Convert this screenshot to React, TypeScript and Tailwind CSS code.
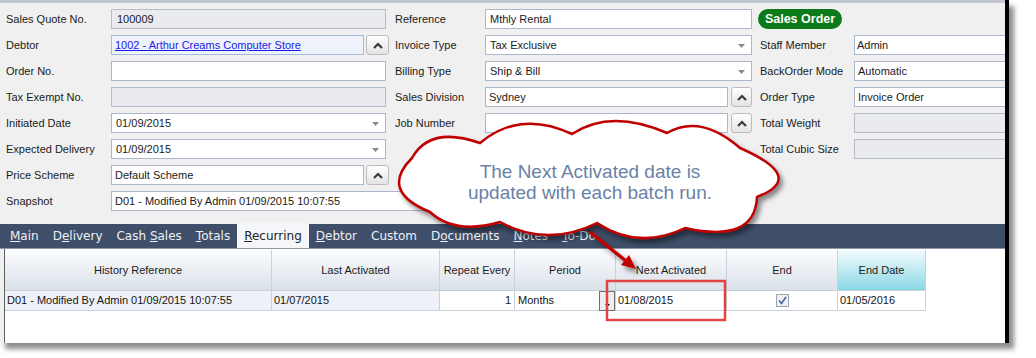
import React from "react";

const LBL = "h-[20px] shrink-0 flex items-center text-[11px] text-[#1b1b1b] whitespace-nowrap";

function DropArrow() {
  return (
    <svg width="7" height="4" viewBox="0 0 7 4" className="absolute right-[6px] top-[8px]">
      <polygon points="0,0 7,0 3.5,4" fill="#8a8a8a" />
    </svg>
  );
}

function UpBtn({ className }: { className: string }) {
  return (
    <div className={className}>
      <svg width="10" height="7" viewBox="0 0 10 7">
        <polyline points="1,6 5,2 9,6" fill="none" stroke="#3a3a3a" strokeWidth="2.2" />
      </svg>
    </div>
  );
}

const btnCls =
  "h-[20px] shrink-0 flex items-center justify-center rounded-[3px] border border-[#bcbcbc] bg-gradient-to-b from-[#ffffff] to-[#e4e4e4]";

function Tab({ children, sel }: { children: React.ReactNode; sel?: boolean }) {
  return sel ? (
    <div className="h-[25px] -mt-px flex items-center px-[7px] bg-[#f4f6f9] text-[#222]">{children}</div>
  ) : (
    <div className="h-full flex items-center px-[7px] text-[#eef1f6]">{children}</div>
  );
}

const hdr =
  "h-[41px] flex items-center justify-center border-r border-b border-[#cbd1da] bg-gradient-to-b from-[#fbfcfd] to-[#dbe1ea] text-[11px] text-[#1b1b1b]";
const cell = "h-[20px] flex items-center border-r border-b border-[#cbd1da] text-[11px] text-[#151515] whitespace-nowrap";

export default function App() {
  return (
    <div className="relative w-[1036px] h-[358px] bg-white overflow-hidden font-['Liberation_Sans',Arial,sans-serif]">
      <div className="w-[1009px] h-[343px] bg-[#f0f0f0] border-r-4 border-black shadow-[5px_6px_5px_rgba(0,0,0,0.45)] flex flex-col overflow-hidden">
        <div className="h-[3px] bg-[#c3c7ce] shrink-0" />
        {/* form */}
        <div className="h-[221px] shrink-0 pt-[6px] pl-[6px] flex">
          {/* col 1 */}
          <div className="w-[383px] shrink-0 flex flex-col gap-[6px]">
            <div className="flex">
              <div className={`${LBL} w-[105px]`}>Sales Quote No.</div>
              <div className="w-[275px] shrink-0 h-[20px] border border-[#b7bcc6] bg-[#e9ebf0] flex items-center pl-[5px] text-[11px] text-[#1b1b1b]">100009</div>
            </div>
            <div className="flex">
              <div className={`${LBL} w-[105px]`}>Debtor</div>
              <div className="w-[253px] shrink-0 h-[20px] border border-[#a6bcdf] bg-[#eef2fb] flex items-center pl-[3px] text-[11px] text-[#1a1aee] underline">1002 - Arthur Creams Computer Store</div>
              <UpBtn className={`${btnCls} w-[23px] ml-[2px]`} />
            </div>
            <div className="flex">
              <div className={`${LBL} w-[105px]`}>Order No.</div>
              <div className="w-[275px] shrink-0 h-[20px] border border-[#abb7cb] bg-white" />
            </div>
            <div className="flex">
              <div className={`${LBL} w-[105px]`}>Tax Exempt No.</div>
              <div className="w-[275px] shrink-0 h-[20px] border border-[#b7bcc6] bg-[#e9ebf0]" />
            </div>
            <div className="flex">
              <div className={`${LBL} w-[105px]`}>Initiated Date</div>
              <div className="relative w-[275px] shrink-0 h-[20px] border border-[#abb7cb] bg-white flex items-center pl-[4px] text-[11px] text-[#1b1b1b]">
                01/09/2015
                <DropArrow />
              </div>
            </div>
            <div className="flex">
              <div className={`${LBL} w-[105px]`}>Expected Delivery</div>
              <div className="relative w-[275px] shrink-0 h-[20px] border border-[#abb7cb] bg-white flex items-center pl-[4px] text-[11px] text-[#1b1b1b]">
                01/09/2015
                <DropArrow />
              </div>
            </div>
            <div className="flex">
              <div className={`${LBL} w-[105px]`}>Price Scheme</div>
              <div className="w-[253px] shrink-0 h-[20px] border border-[#abb7cb] bg-white flex items-center pl-[3px] text-[11px] text-[#1b1b1b]">Default Scheme</div>
              <UpBtn className={`${btnCls} w-[23px] ml-[2px]`} />
            </div>
            <div className="flex">
              <div className={`${LBL} w-[105px]`}>Snapshot</div>
              <div className="w-[641px] shrink-0 h-[20px] border border-[#abb7cb] bg-white flex items-center pl-[3px] text-[11px] text-[#1b1b1b]">D01 - Modified By Admin 01/09/2015 10:07:55</div>
            </div>
          </div>
          {/* col 2 */}
          <div className="w-[357px] shrink-0 ml-[6px] flex flex-col gap-[6px]">
            <div className="flex">
              <div className={`${LBL} w-[90px]`}>Reference</div>
              <div className="w-[267px] shrink-0 h-[20px] border border-[#abb7cb] bg-white flex items-center pl-[4px] text-[11px] text-[#1b1b1b]">Mthly Rental</div>
            </div>
            <div className="flex">
              <div className={`${LBL} w-[90px]`}>Invoice Type</div>
              <div className="relative w-[267px] shrink-0 h-[20px] border border-[#abb7cb] bg-white flex items-center pl-[4px] text-[11px] text-[#1b1b1b]">
                Tax Exclusive
                <DropArrow />
              </div>
            </div>
            <div className="flex">
              <div className={`${LBL} w-[90px]`}>Billing Type</div>
              <div className="relative w-[267px] shrink-0 h-[20px] border border-[#abb7cb] bg-white flex items-center pl-[4px] text-[11px] text-[#1b1b1b]">
                Ship &amp; Bill
                <DropArrow />
              </div>
            </div>
            <div className="flex">
              <div className={`${LBL} w-[90px]`}>Sales Division</div>
              <div className="w-[243px] shrink-0 h-[20px] border border-[#abb7cb] bg-white flex items-center pl-[3px] text-[11px] text-[#1b1b1b]">Sydney</div>
              <UpBtn className={`${btnCls} w-[21px] ml-[3px]`} />
            </div>
            <div className="flex">
              <div className={`${LBL} w-[90px]`}>Job Number</div>
              <div className="w-[243px] shrink-0 h-[20px] border border-[#abb7cb] bg-white" />
              <UpBtn className={`${btnCls} w-[21px] ml-[3px]`} />
            </div>
          </div>
          {/* col 3 */}
          <div className="w-[300px] shrink-0 ml-[6px] flex flex-col gap-[6px]">
            <div className="flex">
              <div className="h-[20px] w-[84px] rounded-full bg-[#0b7a19] flex items-center justify-center text-white font-bold text-[12.5px]">Sales Order</div>
            </div>
            <div className="flex">
              <div className={`${LBL} w-[96px] pl-[2px]`}>Staff Member</div>
              <div className="w-[200px] shrink-0 h-[20px] border border-[#abb7cb] bg-white flex items-center pl-[2px] text-[11px] text-[#1b1b1b]">Admin</div>
            </div>
            <div className="flex">
              <div className={`${LBL} w-[96px] pl-[2px]`}>BackOrder Mode</div>
              <div className="w-[200px] shrink-0 h-[20px] border border-[#abb7cb] bg-white flex items-center pl-[3px] text-[11px] text-[#1b1b1b]">Automatic</div>
            </div>
            <div className="flex">
              <div className={`${LBL} w-[96px] pl-[2px]`}>Order Type</div>
              <div className="w-[200px] shrink-0 h-[20px] border border-[#abb7cb] bg-white flex items-center pl-[3px] text-[11px] text-[#1b1b1b]">Invoice Order</div>
            </div>
            <div className="flex">
              <div className={`${LBL} w-[96px] pl-[2px]`}>Total Weight</div>
              <div className="w-[200px] shrink-0 h-[20px] border border-[#b7bcc6] bg-[#e9ebf0]" />
            </div>
            <div className="flex">
              <div className={`${LBL} w-[96px] pl-[2px]`}>Total Cubic Size</div>
              <div className="w-[200px] shrink-0 h-[20px] border border-[#b7bcc6] bg-[#e9ebf0]" />
            </div>
          </div>
        </div>
        {/* tab bar */}
        <div className="h-[24px] shrink-0 bg-[#3f4e69] pl-[3px] flex items-stretch font-['DejaVu_Sans',Verdana,sans-serif] text-[12px]">
          <Tab><span><span className="underline">M</span>ain</span></Tab>
          <Tab><span>D<span className="underline">e</span>livery</span></Tab>
          <Tab><span>Cash <span className="underline">S</span>ales</span></Tab>
          <Tab><span><span className="underline">T</span>otals</span></Tab>
          <Tab sel><span><span className="underline">R</span>ecurring</span></Tab>
          <Tab><span><span className="underline">D</span>ebtor</span></Tab>
          <Tab><span>Custom</span></Tab>
          <Tab><span>D<span className="underline">o</span>cuments</span></Tab>
          <Tab><span><span className="underline">N</span>otes</span></Tab>
          <Tab><span><span className="underline">T</span>o-Do</span></Tab>
        </div>
        <div className="h-px shrink-0 bg-[#8e97a6]" />
        {/* table area */}
        <div className="flex-1 ml-[4px] border-l border-[#5e5e5e] bg-white pt-px">
          <div className="w-[921px] grid grid-cols-[267px_168px_75px_101px_111px_111px_88px]">
            <div className={hdr}>History Reference</div>
            <div className={hdr}>Last Activated</div>
            <div className={hdr}>Repeat Every</div>
            <div className={hdr}>Period</div>
            <div className={hdr}>Next Activated</div>
            <div className={hdr}>End</div>
            <div className="h-[41px] flex items-center justify-center border-r border-b border-[#cbd1da] bg-gradient-to-b from-[#f3fbfd] to-[#88d8e5] text-[11px] text-[#1b1b1b]">End Date</div>

            <div className={`${cell} bg-[#eef1f8] pl-[2px]`}>D01 - Modified By Admin 01/09/2015 10:07:55</div>
            <div className={`${cell} bg-[#eef1f8] pl-[2px]`}>01/07/2015</div>
            <div className={`${cell} justify-end pr-[3px]`}>1</div>
            <div className={`${cell} pl-[3px] justify-between`}>
              <span>Months</span>
              <div className="w-[16px] h-[20px] border border-[#6e6e6e] bg-[#eeeeee] flex items-end justify-center pb-[3px]">
                <svg width="5" height="3" viewBox="0 0 5 3"><polygon points="0,0 5,0 2.5,3" fill="#111" /></svg>
              </div>
            </div>
            <div className={`${cell} pl-[2px] text-[#16204a]`}>01/08/2015</div>
            <div className={`${cell} justify-center`}>
              <svg width="13" height="13" viewBox="0 0 13 13">
                <rect x="0.5" y="0.5" width="12" height="12" fill="#eef1f6" stroke="#9aa3b2" />
                <polyline points="3,6.5 5.5,9.5 10,3" fill="none" stroke="#4a62a0" strokeWidth="1.6" />
              </svg>
            </div>
            <div className={`${cell} pl-[2px] text-[#16204a]`}>01/05/2016</div>
          </div>
        </div>
      </div>

      {/* annotations overlay */}
      <svg className="absolute left-0 top-0 pointer-events-none" width="1036" height="358" viewBox="0 0 1036 358">
        <defs>
          <filter id="ds" x="-10%" y="-10%" width="130%" height="140%">
            <feDropShadow dx="3" dy="4" stdDeviation="2.5" floodColor="#000" floodOpacity="0.45" />
          </filter>
        </defs>
        <path
          d="M 430 212 Q 379 191 412 158 Q 430 125.5 480 143 Q 520 109.5 572 134 Q 610.5 108.5 667 133 Q 700.5 113.5 740 148 Q 807.5 177.5 757 197 Q 755 243.5 685 228 Q 639 250.5 597 223 Q 547.5 247.5 500 222 Q 455 235 430 212 Z"
          fill="#ffffff"
          stroke="#c00000"
          strokeWidth="2.5"
          filter="url(#ds)"
        />
        <text x="590" y="178" textAnchor="middle" fontFamily="'Liberation Sans', Arial, sans-serif" fontSize="19" fill="#6a82a6">
          The Next Activated date is
        </text>
        <text x="590" y="199" textAnchor="middle" fontFamily="'Liberation Sans', Arial, sans-serif" fontSize="19" fill="#6a82a6">
          updated with each batch run.
        </text>
        <g filter="url(#ds)">
          <line x1="590" y1="232" x2="626" y2="261" stroke="#c00000" strokeWidth="3.5" />
          <polygon points="636,269 621,265 629,255" fill="#c00000" />
        </g>
        <rect x="607" y="281" width="118" height="39" fill="none" stroke="#e04444" strokeWidth="2.5" />
      </svg>
    </div>
  );
}
